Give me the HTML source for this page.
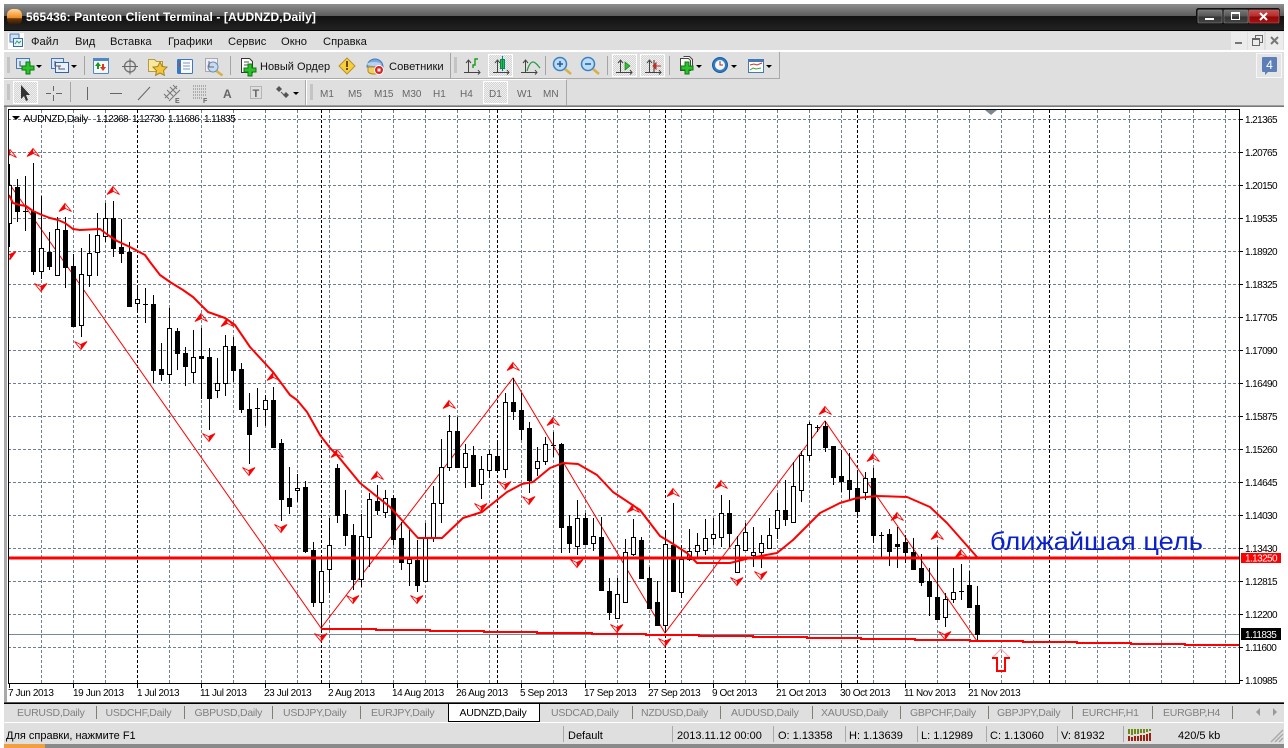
<!DOCTYPE html>
<html><head><meta charset="utf-8"><style>
html,body{margin:0;padding:0;background:#fff;width:1288px;height:748px;overflow:hidden}
svg{display:block;font-family:"Liberation Sans","Noto Sans CJK SC",sans-serif}
.m{font-size:11.2px;fill:#111}
.p{font-size:10px;fill:#000;letter-spacing:-.6px}
.h{font-size:10.3px;fill:#000;letter-spacing:-.35px}
.d{font-size:10px;fill:#000;letter-spacing:-.4px}
.t{font-size:10.5px;fill:#808080;letter-spacing:-.25px}
.s{font-size:11px;fill:#000}
.tf{font-size:10px;fill:#666}
</style></head><body>
<svg width="1288" height="748" viewBox="0 0 1288 748" xmlns="http://www.w3.org/2000/svg">
<defs>
<linearGradient id="tb" x1="0" y1="0" x2="0" y2="1"><stop offset="0" stop-color="#8e8e8e"/><stop offset="1" stop-color="#5c5c5c"/></linearGradient>
<linearGradient id="tb2" x1="0" y1="0" x2="0" y2="1"><stop offset="0" stop-color="#111"/><stop offset="1" stop-color="#222"/></linearGradient>
<linearGradient id="cb" x1="0" y1="0" x2="0" y2="1"><stop offset="0" stop-color="#777"/><stop offset=".5" stop-color="#555"/><stop offset=".5" stop-color="#333"/><stop offset="1" stop-color="#444"/></linearGradient>
<linearGradient id="cr" x1="0" y1="0" x2="0" y2="1"><stop offset="0" stop-color="#c65050"/><stop offset=".5" stop-color="#b52a2a"/><stop offset=".5" stop-color="#920808"/><stop offset="1" stop-color="#a81010"/></linearGradient>
<linearGradient id="og" x1="0" y1="0" x2="0" y2="1"><stop offset="0" stop-color="#ffd9a0"/><stop offset=".55" stop-color="#f08a1e"/><stop offset=".6" stop-color="#6a3a10"/><stop offset="1" stop-color="#2a1608"/></linearGradient>
<pattern id="pr" width="2" height="2" patternUnits="userSpaceOnUse"><rect width="2" height="2" fill="#d4d4d4"/><rect width="1" height="1" fill="#f0f0f0"/><rect x="1" y="1" width="1" height="1" fill="#f0f0f0"/></pattern>
<g id="u"><path d="M0-4.500L6.500 3.500 .5 .5-6 3.500Z" fill="none" stroke="#f00" stroke-width=".9"/><path d="M0-4.500L-6 3.500 .5 .5Z" fill="#f00"/></g>
<g id="n"><path d="M0 4.500L-6.500-3.500-.5-.5 6-3.500Z" fill="none" stroke="#f00" stroke-width=".9"/><path d="M0 4.500L6-3.500-.5-.5Z" fill="#f00"/></g>
<g id="dd"><path d="M0 0h6l-3 3z" fill="#000"/></g>
<clipPath id="cc"><rect x="9" y="110" width="1230" height="573"/></clipPath>
</defs>

<!-- window frame -->
<rect x="4" y="4" width="1280" height="740" fill="#dfdfdf"/>
<rect x="4" y="4" width="1280" height="12" fill="url(#tb)"/>
<rect x="4" y="16" width="1280" height="14" fill="url(#tb2)"/>
<rect x="4" y="30" width="1280" height="1" fill="#000"/>
<rect x="7" y="9" width="15" height="16" rx="6" fill="url(#og)"/>
<text x="26" y="21" style="font-size:12px;font-weight:bold;fill:#fff;letter-spacing:.1px">565436: Panteon Client Terminal - [AUDNZD,Daily]</text>
<!-- caption buttons -->
<rect x="1196.500" y="8.500" width="83" height="15" rx="2" fill="#222" stroke="#111"/>
<rect x="1198" y="10" width="24" height="13" rx="1" fill="url(#cb)" stroke="#888" stroke-width=".6"/>
<rect x="1224" y="10" width="24" height="13" rx="1" fill="url(#cb)" stroke="#888" stroke-width=".6"/>
<rect x="1249" y="10" width="30" height="13" rx="1" fill="url(#cr)" stroke="#c66" stroke-width=".6"/>
<rect x="1205" y="18" width="9" height="2" fill="#fff"/>
<rect x="1231.500" y="12.500" width="8" height="7" fill="none" stroke="#fff"/><rect x="1231" y="12" width="9" height="2" fill="#fff"/>
<path d="M1260 13l7 7M1267 13l-7 7" stroke="#fff" stroke-width="2"/>

<!-- menu bar -->
<rect x="8" y="33" width="16" height="16" fill="#fff"/>
<rect x="10" y="34" width="9" height="8" fill="#cfe0f5" stroke="#4a7ab5" stroke-width="1"/>
<rect x="13.500" y="38.500" width="9" height="8" fill="#e8f0fa" stroke="#3a6aa5" stroke-width="1"/>
<path d="M15 44l2-3 2 2 2-2" stroke="#2a6" fill="none"/>
<text x="31" y="45" class="m">Файл</text>
<text x="75" y="45" class="m">Вид</text>
<text x="110" y="45" class="m">Вставка</text>
<text x="168" y="45" class="m">Графики</text>
<text x="228" y="45" class="m">Сервис</text>
<text x="281" y="45" class="m">Окно</text>
<text x="323" y="45" class="m">Справка</text>
<!-- mdi buttons -->
<rect x="1231" y="32" width="16" height="18" fill="#ececec"/><rect x="1248" y="32" width="16" height="18" fill="#ececec"/><rect x="1266" y="32" width="17" height="18" fill="#ececec"/>
<rect x="1235" y="42" width="7" height="2" fill="#777"/>
<path d="M1252.500 38.500h7v7h-7zM1255.500 38.500v-3h7v7h-3" fill="none" stroke="#666"/><rect x="1252" y="38" width="8" height="2" fill="#666"/>
<path d="M1271 37l7 7M1278 37l-7 7" stroke="#777" stroke-width="2"/>
<rect x="4" y="50" width="1280" height="2" fill="#fff"/>

<!-- toolbars -->
<rect x="4" y="78" width="776" height="1" fill="#a9a9a9"/>
<rect x="779" y="52" width="1" height="27" fill="#a9a9a9"/>
<rect x="4" y="79" width="562" height="1" fill="#fff"/>
<rect x="4" y="105" width="1280" height="1" fill="#a0a0a0"/>
<rect x="4" y="106" width="1280" height="1" fill="#777"/>
<path d="M7 58h3M7 60h3M7 62h3M7 64h3M7 66h3M7 68h3M7 70h3M7 72h3M7 85h3M7 87h3M7 89h3M7 91h3M7 93h3M7 95h3M7 97h3M7 99h3M310 85h3M310 87h3M310 89h3M310 91h3M310 93h3M310 95h3M310 97h3M310 99h3M454 58h3M454 60h3M454 62h3M454 64h3M454 66h3M454 68h3M454 70h3M454 72h3" stroke="#aaa"/>
<path d="M84.500 56v19M230.500 56v19M450.500 53v25M545.500 56v19M607.500 56v19M669.500 56v19M70.500 82v20" stroke="#a4a4a4"/>
<path d="M306.500 80v25" stroke="#fff"/><path d="M305.500 80v25M566.500 80v25" stroke="#a9a9a9"/>
<g transform="translate(0,1)">
<!-- new chart -->
<rect x="16.500" y="57.500" width="13" height="10" fill="#dbe7f6" stroke="#4678b4"/><path d="M20 60v5h6" stroke="#446" fill="none"/>
<path d="M26 61h4v4h4v4h-4v4h-4v-4h-4v-4h4z" fill="#2fc02f" stroke="#0a7a0a"/>
<use href="#dd" x="36" y="64"/>
<!-- profiles -->
<rect x="51.500" y="57.500" width="12" height="10" fill="#dbe7f6" stroke="#4678b4"/><rect x="55.500" y="61.500" width="13" height="10" fill="#eaf1fa" stroke="#2f64a8"/>
<path d="M55 60v5h6M59 65v3h6" stroke="#556" fill="none"/><use href="#dd" x="71" y="64"/>
<!-- market watch -->
<rect x="93.500" y="57.500" width="15" height="15" rx="1" fill="#f5f8fc" stroke="#4f87c7"/><rect x="93" y="57" width="16" height="3" fill="#4f87c7"/>
<path d="M98 61l3 4h-2v3h-2v-3h-2z" fill="#1a9a1a"/><path d="M103 70l-3-4h2v-3h2v3h2z" fill="#d8391e"/>
<!-- crosshair -->
<circle cx="130" cy="65.500" r="5.500" fill="none" stroke="#777" stroke-width="1.400"/><path d="M130 57.500v16M122 65.500h16" stroke="#666"/>
<!-- folder star -->
<path d="M148.500 58.500h6l2 2h6v10h-14z" fill="#f8e8a0" stroke="#b59a40"/><path d="M160 62l2.200 4.500 4.800.6-3.500 3.400.9 4.800-4.400-2.300-4.400 2.300.9-4.800-3.500-3.400 4.800-.6z" fill="#f2c53a" stroke="#a88420" transform="translate(0,-1)"/>
<!-- terminal -->
<rect x="177.500" y="58.500" width="15" height="14" rx="1" fill="#fafcff" stroke="#3b78c2"/><rect x="178" y="59" width="3" height="13" fill="#3b78c2"/><path d="M183 62h7M183 65h7M183 68h7" stroke="#7a98c0"/><rect x="179" y="62" width="1" height="3" fill="#d33"/>
<!-- tester -->
<rect x="205.500" y="57.500" width="12" height="13" fill="#eef" stroke="#aaa"/><circle cx="213" cy="66" r="5" fill="#c5dcf2" stroke="#6f8db0"/><path d="M216.500 70l6 4.500" stroke="#d8b04a" stroke-width="2.500"/><path d="M209 60v6h5" stroke="#666" fill="none"/>
<!-- new order -->
<path d="M241.500 57.500h8l3 3v11h-11z" fill="#fff" stroke="#333"/><path d="M244 61h5M244 64h6" stroke="#555"/>
<path d="M248 63h4v4h4v4h-4v4h-4v-4h-4v-4h4z" fill="#2fc02f" stroke="#0a7a0a"/>
<!-- alert -->
<path d="M347 57l8 8-8 8-8-8z" fill="#f7cf3a" stroke="#b7922a"/><rect x="346" y="60" width="2" height="6" fill="#6a4a10"/><rect x="346" y="67" width="2" height="2" fill="#6a4a10"/>
<!-- expert -->
<path d="M367 66c0-5 4-8 8-8s8 3 8 8z" fill="#79a9dc" stroke="#4678b4"/><ellipse cx="374" cy="63" rx="7" ry="2" fill="#b7d2ef"/><path d="M368 66h12v4c0 2-3 3-6 3s-6-1-6-3z" fill="#f3cf60" stroke="#b08a20"/><circle cx="379" cy="69" r="4.500" fill="#d22" stroke="#fff"/><rect x="377.500" y="67.500" width="3" height="3" fill="#fff"/>
</g>
<text x="260" y="70" style="font-size:11px;fill:#111">Новый Ордер</text>
<text x="389" y="70" class="m">Советники</text>
<!-- bars/candle/line -->
<rect x="488.500" y="54.500" width="24" height="22" fill="url(#pr)" stroke="#fff"/>
<rect x="612.500" y="54.500" width="24" height="22" fill="url(#pr)" stroke="#fff"/>
<rect x="640.500" y="54.500" width="24" height="22" fill="url(#pr)" stroke="#fff"/>
<path d="M468.500 60v13M464 72.500h16M466 63l2.500-3 2.500 3M478 70l2 2.500-2 2M497.500 60v13M493 72.500h16M495 63l2.500-3 2.500 3M507 70l2 2.500-2 2M525.500 60v13M521 72.500h16M523 63l2.500-3 2.500 3M535 70l2 2.500-2 2" stroke="#444" fill="none"/>
<path d="M473 68v-3h2v-6h3" stroke="#14a014" fill="none" stroke-width="1.400"/>
<rect x="500.500" y="59.500" width="4" height="9" fill="#30c030" stroke="#086"/><path d="M502.500 56v15" stroke="#086"/>
<path d="M527 71c2-7 4-9 6-9 3 0 5 4 7 6" stroke="#2a9a4a" fill="none" stroke-width="1.300"/>
<!-- zoom -->
<circle cx="560" cy="64" r="6.500" fill="#bcdcf6" stroke="#3a80c0" stroke-width="1.500"/><path d="M557 64h6M560 61v6" stroke="#1d5ca0" stroke-width="1.500"/><path d="M565 69l6 5" stroke="#d8b04a" stroke-width="2.500"/>
<circle cx="588" cy="64" r="6.500" fill="#bcdcf6" stroke="#3a80c0" stroke-width="1.500"/><path d="M585 64h6" stroke="#1d5ca0" stroke-width="1.500"/><path d="M593 69l6 5" stroke="#d8b04a" stroke-width="2.500"/>
<!-- shift -->
<path d="M620.500 60v13M616 72.500h16M618 63l2.500-3 2.500 3M630 70l2 2.500-2 2M649.500 60v13M645 72.500h16M647 63l2.500-3 2.500 3M659 70l2 2.500-2 2" stroke="#444" fill="none"/>
<path d="M625 62l5 4-5 4z" fill="#30c030" stroke="#107010" stroke-width=".6"/>
<path d="M654 60v13" stroke="#333"/><path d="M656 66h5M656 63l-3 3 3 3z" fill="#c03020" stroke="#c03020"/>
<!-- templates etc -->
<path d="M680.500 58.500h8l2 2v10h-10zM683.500 56.500h6l3 3v8" fill="#fff" stroke="#444"/><path d="M685 62h4v4h4v4h-4v4h-4v-4h-4v-4h4z" fill="#2fc02f" stroke="#0a7a0a"/><use href="#dd" x="696" y="65"/>
<circle cx="720" cy="65" r="7.500" fill="#2f7cc4" stroke="#1a5c9c"/><circle cx="720" cy="65" r="5" fill="#f4f8fc"/><path d="M720 61v4h3" stroke="#933" fill="none"/><use href="#dd" x="731" y="65"/>
<rect x="748.500" y="59.500" width="15" height="13" fill="#fff" stroke="#4678b4"/><rect x="748" y="59" width="16" height="3" fill="#4678b4"/><path d="M750 65l4-1 3 1 5-2" stroke="#c33" fill="none"/><path d="M750 70l3-2 3 1 5-1" stroke="#3a3" fill="none"/><use href="#dd" x="766" y="65"/>
<!-- messages -->
<rect x="1256.500" y="53.500" width="25" height="24" fill="#e4e4e4" stroke="#f6f6f6"/>
<path d="M1263 57h13a1 1 0 0 1 1 1v13a1 1 0 0 1-1 1h-8l-3 3v-3h-2a1 1 0 0 1-1-1v-13a1 1 0 0 1 1-1z" fill="#5c7fb8"/>
<text x="1269.500" y="69" text-anchor="middle" style="font-size:12px;fill:#fff">4</text>

<!-- row 2 -->
<rect x="13.500" y="81.500" width="24" height="22" fill="url(#pr)" stroke="#fff"/>
<path d="M21 85v14l3-3 2 5 2-1-2-5h4z" fill="#333"/>
<path d="M53.500 86v5M53.500 95v6M46 93.500h5M56 93.500h6" stroke="#666"/>
<path d="M87.500 87v13M110 93.500h12M138 100l12-13" stroke="#666"/>
<path d="M165 98l12-12M169 101l11-11M167 90l6 6M170 87l6 6M164 94l5 5M173 85l4 4" stroke="#777" fill="none"/><text x="175" y="103" style="font-size:7px;font-weight:bold;fill:#666">E</text>
<path d="M193 86h13M193 89h13M193 92h13M193 95h13M193 98h10" stroke="#777" stroke-dasharray="1 1"/><text x="203" y="103" style="font-size:7px;font-weight:bold;fill:#666">F</text>
<text x="223" y="98" style="font-size:12px;font-weight:bold;fill:#666">A</text>
<rect x="250.500" y="86.500" width="11" height="12" fill="none" stroke="#888" stroke-dasharray="1 1"/><text x="252.500" y="97" style="font-size:11px;font-weight:bold;fill:#666">T</text>
<path d="M279 86l3 3-3 3-3-3zM286 92l3 3-3 3-3-3z" fill="#555"/><path d="M281 92l5 5" stroke="#555"/><use href="#dd" x="293" y="92"/>
<rect x="483.500" y="81.500" width="24" height="22" fill="url(#pr)" stroke="#fff"/>
<text x="320" y="97" class="tf">M1</text><text x="348" y="97" class="tf">M5</text><text x="374" y="97" class="tf">M15</text><text x="402" y="97" class="tf">M30</text><text x="433" y="97" class="tf">H1</text><text x="460" y="97" class="tf">H4</text><text x="489" y="97" class="tf">D1</text><text x="517" y="97" class="tf">W1</text><text x="543" y="97" class="tf">MN</text>

<!-- chart -->
<rect x="4" y="107" width="3" height="596" fill="#a9a9a9"/>
<rect x="7" y="107" width="1277" height="596" fill="#fff"/>
<g shape-rendering="crispEdges">
<path stroke="#6f7f90" stroke-dasharray="3 2" d="M8 119.500H1239M8 152.500H1239M8 185.500H1239M8 218.500H1239M8 251.500H1239M8 284.500H1239M8 317.500H1239M8 350.500H1239M8 383.500H1239M8 416.500H1239M8 449.500H1239M8 482.500H1239M8 515.500H1239M8 548.500H1239M8 581.500H1239M8 614.500H1239M8 647.500H1239"/>
<path stroke="#6f7f90" stroke-dasharray="3 2" d="M41.500 110V683M73.500 110V683M105.500 110V683M169.500 110V683M201.500 110V683M233.500 110V683M265.500 110V683M297.500 110V683M329.500 110V683M361.500 110V683M393.500 110V683M425.500 110V683M457.500 110V683M489.500 110V683M521.500 110V683M553.500 110V683M585.500 110V683M617.500 110V683M649.500 110V683M681.500 110V683M713.500 110V683M745.500 110V683M777.500 110V683M809.500 110V683M841.500 110V683M873.500 110V683M905.500 110V683M937.500 110V683M969.500 110V683M1001.500 110V683M1033.500 110V683M1065.500 110V683M1097.500 110V683M1129.500 110V683M1161.500 110V683M1193.500 110V683M1225.500 110V683"/>
<path stroke="#000" stroke-dasharray="3 2" d="M137.500 110V683M321.500 110V683M497.500 110V683M665.500 110V683M857.500 110V683M1049.500 110V683"/>
<rect x="9" y="634" width="1230" height="1" fill="#778899"/>
</g>
<g clip-path="url(#cc)">
<path fill="none" stroke="#f00" stroke-width="1" d="M8 182L321 628 513 378 665 633 825 421 977 641"/>
<g shape-rendering="crispEdges">
<path fill="#fff" stroke="#000" d="M9.500 164V185M9.500 223V247M8.500 185.500h3v38h-3zM41.500 196V248M41.500 271V279M39.500 248.500h4v23h-4zM57.500 217V229M55.500 229.500h4v46h-4zM81.500 248V274M81.500 325V337M79.500 274.500h4v51h-4zM89.500 234V253M89.500 275V287M87.500 253.500h4v22h-4zM97.500 213V235M97.500 252V276M95.500 235.500h4v17h-4zM105.500 203V218M105.500 236V242M103.500 218.500h4v18h-4zM137.500 288V299M137.500 303V310M135.500 299.500h4v4h-4zM169.500 308V328M169.500 374V384M167.500 328.500h4v46h-4zM193.500 330V357M193.500 372V383M191.500 357.500h4v15h-4zM217.500 358V383M217.500 390V398M215.500 383.500h4v7h-4zM225.500 335V346M225.500 383V396M223.500 346.500h4v37h-4zM265.500 395V400M265.500 409V426M263.500 400.500h4v9h-4zM297.500 474V488M297.500 490V502M295.500 488.500h4v2h-4zM321.500 558V571M321.500 602V628M319.500 571.500h4v31h-4zM329.500 518V545M329.500 569V593M327.500 545.500h4v24h-4zM361.500 514V536M361.500 579V587M359.500 536.500h4v43h-4zM369.500 493V499M369.500 537V567M367.500 499.500h4v38h-4zM385.500 490V498M385.500 512V518M383.500 498.500h4v14h-4zM409.500 530V559M409.500 563V586M407.500 559.500h4v4h-4zM425.500 523V537M423.500 537.500h4v44h-4zM433.500 486V503M433.500 538V542M431.500 503.500h4v35h-4zM441.500 439V467M441.500 503V523M439.500 467.500h4v36h-4zM449.500 415V431M449.500 467V471M447.500 431.500h4v36h-4zM465.500 444V453M465.500 467V488M463.500 453.500h4v14h-4zM481.500 456V469M481.500 484V499M479.500 469.500h4v15h-4zM489.500 450V454M489.500 470V478M487.500 454.500h4v16h-4zM505.500 393V402M505.500 469V478M503.500 402.500h4v67h-4zM537.500 447V461M537.500 468V476M535.500 461.500h4v7h-4zM545.500 437V444M545.500 461V465M543.500 444.500h4v17h-4zM577.500 500V518M577.500 546V555M575.500 518.500h4v28h-4zM593.500 518V536M593.500 543V551M591.500 536.500h4v7h-4zM617.500 578V594M617.500 618V619M615.500 594.500h4v24h-4zM625.500 539V552M623.500 552.500h4v50h-4zM633.500 519V537M633.500 554V556M631.500 537.500h4v17h-4zM665.500 530V544M665.500 625V633M663.500 544.500h4v81h-4zM681.500 545V559M681.500 592V598M679.500 559.500h4v33h-4zM689.500 529V551M689.500 559V561M687.500 551.500h4v8h-4zM697.500 533V545M697.500 551V557M695.500 545.500h4v6h-4zM705.500 519V538M705.500 550V555M703.500 538.500h4v12h-4zM713.500 518V534M713.500 538V545M711.500 534.500h4v4h-4zM721.500 495V513M721.500 537V547M719.500 513.500h4v24h-4zM737.500 536V545M735.500 545.500h4v27h-4zM745.500 523V532M745.500 550V551M743.500 532.500h4v18h-4zM753.500 527V552M753.500 555V567M751.500 552.500h4v3h-4zM761.500 535V543M761.500 552V568M759.500 543.500h4v9h-4zM769.500 518V535M767.500 535.500h4v13h-4zM777.500 493V510M777.500 528V539M775.500 510.500h4v18h-4zM793.500 462V486M791.500 486.500h4v36h-4zM801.500 451V455M801.500 490V502M799.500 455.500h4v35h-4zM809.500 422V424M809.500 455V461M807.500 424.500h4v31h-4zM865.500 472V478M865.500 492V500M863.500 478.500h4v14h-4zM945.500 593V599M945.500 617V627M943.500 599.500h4v18h-4zM953.500 568V592M953.500 599V603M951.500 592.500h4v7h-4z"/>
<path fill="#000" stroke="#000" d="M17.500 179V222M15.500 187.500h4v24h-4zM25.500 176V231M23 211.500h5M33.500 163V275M31.500 211.500h4v60h-4zM49.500 232V270M47.500 252.500h4v14h-4zM65.500 217V288M63.500 230.500h4v37h-4zM73.500 254V327M71.500 266.500h4v60h-4zM113.500 201V257M111.500 218.500h4v30h-4zM121.500 219V263M119.500 247.500h4v6h-4zM129.500 242V307M127.500 252.500h4v54h-4zM145.500 288V323M143 304.500h5M153.500 295V383M151.500 304.500h4v66h-4zM161.500 343V381M159.500 369.500h4v5h-4zM177.500 328V370M175.500 331.500h4v22h-4zM185.500 347V386M183.500 353.500h4v13h-4zM201.500 328V399M199.500 356.500h4v2h-4zM209.500 348V430M207.500 357.500h4v41h-4zM233.500 337V382M231.500 346.500h4v24h-4zM241.500 363V413M239.500 369.500h4v40h-4zM249.500 393V464M247.500 409.500h4v25h-4zM257.500 388V427M255 408.500h5M273.500 387V448M271.500 400.500h4v47h-4zM281.500 439V521M279.500 443.500h4v56h-4zM289.500 467V514M287.500 498.500h4v8h-4zM305.500 481V553M303.500 487.500h4v64h-4zM313.500 542V607M311.500 550.500h4v52h-4zM337.500 464V523M335.500 468.500h4v47h-4zM345.500 490V546M343.500 514.500h4v21h-4zM353.500 524V590M351.500 535.500h4v44h-4zM377.500 485V515M375.500 501.500h4v9h-4zM393.500 495V545M391.500 498.500h4v41h-4zM401.500 522V570M399.500 538.500h4v24h-4zM417.500 540V592M415.500 560.500h4v25h-4zM457.500 417V467M455.500 431.500h4v36h-4zM473.500 446V487M471.500 455.500h4v31h-4zM497.500 440V470M495.500 456.500h4v14h-4zM513.500 378V420M511.500 402.500h4v9h-4zM521.500 393V440M519.500 410.500h4v19h-4zM529.500 422V493M527.500 428.500h4v52h-4zM553.500 432V457M551 445.500h5M561.500 443V553M559.500 444.500h4v83h-4zM569.500 515V553M567.500 526.500h4v17h-4zM585.500 513V544M583.500 518.500h4v26h-4zM601.500 517V590M599.500 537.500h4v53h-4zM609.500 578V620M607.500 591.500h4v21h-4zM641.500 537V578M639.500 540.500h4v38h-4zM649.500 567V608M647.500 578.500h4v30h-4zM657.500 581V625M655.500 602.500h4v23h-4zM673.500 503V591M671.500 545.500h4v46h-4zM729.500 500V547M727.500 513.500h4v20h-4zM785.500 480V526M783.500 510.500h4v9h-4zM817.500 425V432M815 427.500h5M825.500 421V452M823.500 426.500h4v21h-4zM833.500 446V485M831.500 446.500h4v31h-4zM841.500 450V492M839.500 476.500h4v5h-4zM849.500 453V500M847.500 480.500h4v9h-4zM857.500 473V516M855.500 488.500h4v23h-4zM873.500 468V543M871.500 478.500h4v57h-4zM881.500 532V558M879 535.500h5M889.500 529V566M887.500 534.500h4v17h-4zM897.500 527V568M895.500 544.500h4v2h-4zM905.500 535V563M903.500 542.500h4v10h-4zM913.500 538V569M911.500 552.500h4v17h-4zM921.500 554V586M919.500 568.500h4v14h-4zM929.500 568V616M927.500 581.500h4v15h-4zM937.500 547V620M935.500 597.500h4v22h-4zM961.500 564V600M959 591.500h5M969.500 571V607M967.500 585.500h4v22h-4zM977.500 586V642M975.500 605.500h4v29h-4z"/>
</g>
<!-- moving average -->
<path fill="none" stroke="#f00" stroke-width="2" stroke-linejoin="round" d="M9 195L13 203 20 205 26 206 33 211 42 215 50 218 58 220 65 223 73 229 80 230 100 229 108 235 117 241 130 247 145 255 150 262 160 275 170 282 183 290 193 297 208 312 225 318 235 325 250 347 273 372 290 395 297 400 307 412 320 435 330 448 337 455 360 483 390 507 418 538 442 538 463 518 482 512 507 492 522 484 533 482 550 468 563 463 578 464 597 475 613 492 640 510 660 536 670 542 687 553 697 563 730 563 750 558 777 553 793 540 803 530 820 513 840 503 857 498 877 496 907 497 930 507 947 523 977 557"/>
<!-- horizontal -->
<rect x="8" y="556.500" width="1231" height="3" fill="#f00"/>
<path fill="none" stroke="#f00" stroke-width="2" shape-rendering="crispEdges" d="M321 629H376V630H430V631H484V632H537V633H592V634H646V635H699V636H753V637H807V638H861V639H915V640H970V641H1023V642H1077V643H1131V644H1185V645H1239"/>
<!-- fractals -->
<use href="#u" x="10" y="154"/><use href="#u" x="33" y="153"/><use href="#u" x="65" y="208"/><use href="#u" x="113" y="191"/>
<use href="#u" x="201" y="318"/><use href="#u" x="227" y="323"/><use href="#u" x="273" y="377"/><use href="#u" x="337" y="454"/><use href="#u" x="377" y="476"/><use href="#u" x="449" y="405"/><use href="#u" x="513" y="367"/><use href="#u" x="553" y="422"/><use href="#u" x="633" y="509"/><use href="#u" x="673" y="493"/><use href="#u" x="721" y="485"/><use href="#u" x="825" y="411"/><use href="#u" x="873" y="458"/><use href="#u" x="897" y="517"/><use href="#u" x="937" y="536"/><use href="#u" x="961" y="554"/>
<use href="#n" x="10" y="255"/><use href="#n" x="41" y="287"/><use href="#n" x="81" y="345"/><use href="#n" x="209" y="437"/><use href="#n" x="249" y="471"/><use href="#n" x="281" y="528"/><use href="#n" x="321" y="637"/><use href="#n" x="353" y="599"/><use href="#n" x="417" y="599"/><use href="#n" x="481" y="507"/><use href="#n" x="505" y="485"/><use href="#n" x="529" y="500"/><use href="#n" x="577" y="563"/><use href="#n" x="617" y="628"/><use href="#n" x="665" y="642"/><use href="#n" x="737" y="581"/><use href="#n" x="761" y="575"/><use href="#n" x="945" y="635"/>
<!-- arrow -->
<path d="M992 658l9-9 9 9" fill="none" stroke="#f8b0b0" stroke-width="1.200"/>
<path d="M992 658h5v13h8v-13h5" fill="none" stroke="#f00" stroke-width="2"/>
<text x="990" y="550" textLength="213" lengthAdjust="spacingAndGlyphs" style="font-size:25px;fill:#0a22cc">ближайшая цель</text>
</g>
<path d="M985 110h12l-6 5z" fill="#7a8796"/>
<!-- frame -->
<rect x="8.500" y="109.500" width="1231" height="574" fill="none" stroke="#000" shape-rendering="crispEdges"/>
<!-- header -->
<path d="M12 116h8l-4 4z" fill="#000"/>
<text x="23.500" y="122" class="h">AUDNZD,Daily</text>
<text x="96" y="122" class="p">1.12368</text><text x="132" y="122" class="p">1.12730</text><text x="168" y="122" class="p">1.11686</text><text x="204" y="122" class="p">1.11835</text>
<!-- price axis -->
<path stroke="#000" shape-rendering="crispEdges" d="M1239 119.500h4M1239 152.500h4M1239 185.500h4M1239 218.500h4M1239 251.500h4M1239 284.500h4M1239 317.500h4M1239 350.500h4M1239 383.500h4M1239 416.500h4M1239 449.500h4M1239 482.500h4M1239 515.500h4M1239 548.500h4M1239 581.500h4M1239 614.500h4M1239 647.500h4M1239 680.500h4"/>
<text x="1245" y="123" class="p">1.21365</text><text x="1245" y="156" class="p">1.20765</text><text x="1245" y="189" class="p">1.20150</text><text x="1245" y="222" class="p">1.19535</text><text x="1245" y="255" class="p">1.18920</text><text x="1245" y="288" class="p">1.18325</text><text x="1245" y="321" class="p">1.17705</text><text x="1245" y="354" class="p">1.17090</text><text x="1245" y="387" class="p">1.16490</text><text x="1245" y="420" class="p">1.15875</text><text x="1245" y="453" class="p">1.15260</text><text x="1245" y="486" class="p">1.14645</text><text x="1245" y="519" class="p">1.14030</text><text x="1245" y="552" class="p">1.13430</text><text x="1245" y="585" class="p">1.12815</text><text x="1245" y="618" class="p">1.12200</text><text x="1245" y="651" class="p">1.11600</text><text x="1245" y="684" class="p">1.10985</text>
<rect x="1241" y="553" width="40" height="10" fill="#f00"/><text x="1245" y="561.500" style="font-size:10px;fill:#fff;letter-spacing:-.6px">1.13250</text>
<rect x="1241" y="628" width="40" height="12" fill="#000"/><text x="1245" y="638" style="font-size:10px;fill:#fff;letter-spacing:-.6px">1.11835</text>
<!-- date axis -->
<path stroke="#000" shape-rendering="crispEdges" d="M9.500 683v5M73.500 683v5M137.500 683v5M201.500 683v5M265.500 683v5M329.500 683v5M393.500 683v5M457.500 683v5M521.500 683v5M585.500 683v5M649.500 683v5M713.500 683v5M777.500 683v5M841.500 683v5M905.500 683v5M969.500 683v5"/>
<text x="8" y="696" class="d">7 Jun 2013</text><text x="73" y="696" class="d">19 Jun 2013</text><text x="137" y="696" class="d">1 Jul 2013</text><text x="200" y="696" class="d">11 Jul 2013</text><text x="264" y="696" class="d">23 Jul 2013</text><text x="328" y="696" class="d">2 Aug 2013</text><text x="392" y="696" class="d">14 Aug 2013</text><text x="456" y="696" class="d">26 Aug 2013</text><text x="520" y="696" class="d">5 Sep 2013</text><text x="584" y="696" class="d">17 Sep 2013</text><text x="648" y="696" class="d">27 Sep 2013</text><text x="712" y="696" class="d">9 Oct 2013</text><text x="776" y="696" class="d">21 Oct 2013</text><text x="840" y="696" class="d">30 Oct 2013</text><text x="904" y="696" class="d">11 Nov 2013</text><text x="968" y="696" class="d">21 Nov 2013</text>

<!-- tabs -->
<rect x="4" y="702" width="1280" height="1" fill="#555"/>
<rect x="4" y="703" width="1280" height="19" fill="#dfdfdf"/>
<rect x="4" y="703" width="1280" height="1" fill="#000"/>
<rect x="4" y="722" width="1280" height="1" fill="#fff"/>
<rect x="448.500" y="703.500" width="91" height="18" fill="#fff" stroke="#000"/>
<path stroke="#808070" shape-rendering="crispEdges" d="M96.500 706v13M184.500 706v13M272.500 706v13M360.500 706v13M632.500 706v13M720.500 706v13M812.500 706v13M900.500 706v13M988.500 706v13M1072.500 706v13M1152.500 706v13M1232.500 706v13"/>
<text x="17" y="716" class="t">EURUSD,Daily</text><text x="105.500" y="716" class="t">USDCHF,Daily</text><text x="194.500" y="716" class="t">GBPUSD,Daily</text><text x="283" y="716" class="t">USDJPY,Daily</text><text x="371" y="716" class="t">EURJPY,Daily</text>
<text x="459.500" y="716" style="font-size:10.500px;fill:#000;letter-spacing:-.25px">AUDNZD,Daily</text>
<text x="551" y="716" class="t">USDCAD,Daily</text><text x="641" y="716" class="t">NZDUSD,Daily</text><text x="731" y="716" class="t">AUDUSD,Daily</text><text x="821" y="716" class="t">XAUUSD,Daily</text><text x="910" y="716" class="t">GBPCHF,Daily</text><text x="997" y="716" class="t">GBPJPY,Daily</text><text x="1082" y="716" class="t">EURCHF,H1</text><text x="1163" y="716" class="t">EURGBP,H4</text>
<path d="M1260 708l-4 4 4 4zM1273 708l4 4-4 4z" fill="#999"/>

<!-- status bar -->
<path stroke="#a9a9a9" shape-rendering="crispEdges" d="M563.500 726v16M672.500 726v16M773.500 726v16M845.500 726v16M917.500 726v16M986.500 726v16M1057.500 726v16M1123.500 726v16"/>
<text x="6" y="739" class="s">Для справки, нажмите F1</text>
<text x="568" y="739" class="s">Default</text><text x="677" y="739" class="s">2013.11.12 00:00</text><text x="778" y="739" class="s">O: 1.13358</text><text x="849" y="739" class="s">H: 1.13639</text><text x="921" y="739" class="s">L: 1.12989</text><text x="990" y="739" class="s">C: 1.13060</text><text x="1061" y="739" class="s">V: 81932</text><text x="1178" y="739" class="s">420/5 kb</text>
<g shape-rendering="crispEdges">
<path stroke="#6a8a10" stroke-width="2" d="M1129 729v5M1132 729v6M1135 729v5M1138 729v5M1141 729v4M1144 729v4M1147 729v3M1150 729v2"/>
<path stroke="#a02010" stroke-width="2" d="M1129 736v5M1132 737v4M1135 736v5M1138 736v5M1141 735v6M1144 735v6M1147 734v7M1150 733v8"/>
</g>
<path d="M1271 742l12-12M1275 742l8-8M1279 742l4-4" stroke="#aaa" stroke-width="1.500"/>
<!-- bottom strip -->
<rect x="0" y="744" width="1288" height="4" fill="#fff"/>
<rect x="4" y="744" width="1280" height="4" fill="#8a8a8a"/>
<rect x="4" y="744" width="41" height="4" fill="#f0a040"/>
</svg>
</body></html>
